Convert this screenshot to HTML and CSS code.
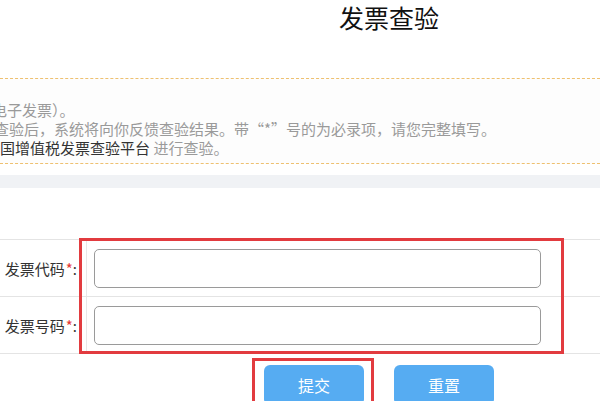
FILE: index.html
```html
<!DOCTYPE html>
<html lang="zh-CN">
<head>
<meta charset="utf-8">
<title>发票查验</title>
<link rel="stylesheet" href="styles.css">
</head>
<body>
<div class="page">
  <h1 class="title">发票查验</h1>
  <div class="notes">
    <p class="line l1">电子发票）。</p>
    <p class="line l2">查验后，系统将向你反馈查验结果。带“*”号的为必录项，请您完整填写。</p>
    <p class="line l3"><a class="link">国增值税发票查验平台</a> 进行查验。</p>
  </div>
  <div class="band"></div>
  <div class="form-wrap">
    <div class="table">
      <div class="row">
        <div class="label">发票代码<span class="req">*</span>:</div>
        <div class="cell"><input class="input" type="text"></div>
      </div>
      <div class="row">
        <div class="label">发票号码<span class="req">*</span>:</div>
        <div class="cell"><input class="input" type="text"></div>
      </div>
    </div>
    <div class="mark mark-table"></div>
  </div>
  <div class="actions">
    <button class="btn">提交</button>
    <button class="btn">重置</button>
    <div class="mark mark-btn"></div>
  </div>
</div>
</body>
</html>
```

FILE: styles.css
```css
html, body {
  margin: 0;
  padding: 0;
  background: #fff;
}
body {
  width: 600px;
  height: 401px;
  overflow: hidden;
  font-family: "Microsoft YaHei", "Noto Sans CJK SC", "Noto Sans", sans-serif;
  color: #333;
}
.page {
  position: relative;
  width: 600px;
}
.title {
  margin: 0;
  height: 78px;
  padding-left: 339px;
  font-size: 25px;
  font-weight: normal;
  line-height: 34px;
  color: #111;
  box-sizing: border-box;
}
.notes {
  border-top: 1px dashed #eec070;
  border-bottom: 1px dashed #eec070;
  background: #fdfdfd;
  padding: 21px 0 8px;
  height: 86px;
  box-sizing: border-box;
  overflow: hidden;
}
.line {
  margin: 0;
  font-size: 15px;
  line-height: 19px;
  color: #9a9a9a;
  white-space: nowrap;
}
.l1 { text-indent: -8px; }
.l2 { text-indent: -6px; }
.l3 { text-indent: 0; }
.link {
  color: #333;
  text-decoration: none;
}
.band {
  margin-top: 11px;
  height: 13px;
  background: #f0f2f5;
}
.form-wrap {
  position: relative;
  margin-top: 51px;
}
.table {
  border-top: 1px solid #e4e4e4;
}
.row {
  display: flex;
  height: 56px;
  border-bottom: 1px solid #e4e4e4;
}
.label {
  width: 87px;
  flex: none;
  box-sizing: border-box;
  border-right: 1px solid #e8e8e8;
  display: flex;
  align-items: center;
  justify-content: flex-end;
  padding-right: 9px;
  font-size: 15px;
  color: #333;
  white-space: nowrap;
}
.req {
  color: #e53935;
  margin-left: 1px;
}
.cell {
  flex: 1;
  display: flex;
  align-items: center;
  padding-left: 7px;
}
.input {
  width: 447px;
  height: 39px;
  box-sizing: border-box;
  border: 1px solid #9a9a9a;
  border-radius: 5px;
  background: #fff;
  margin: 0;
  padding: 0 8px;
  outline: none;
}
.mark {
  position: absolute;
  border: 3px solid #e23b3f;
  box-sizing: border-box;
  pointer-events: none;
}
.mark-table {
  left: 79px;
  top: -1px;
  width: 485px;
  height: 116px;
}
.actions {
  position: relative;
  display: flex;
  gap: 30px;
  padding-left: 264px;
  margin-top: 11px;
}
.btn {
  width: 100px;
  height: 40px;
  border: none;
  border-radius: 6px;
  background: #56acf2;
  color: #fff;
  font-family: inherit;
  font-size: 16px;
  padding: 0;
}
.mark-btn {
  left: 252px;
  top: -7px;
  width: 122px;
  height: 50px;
}
```
